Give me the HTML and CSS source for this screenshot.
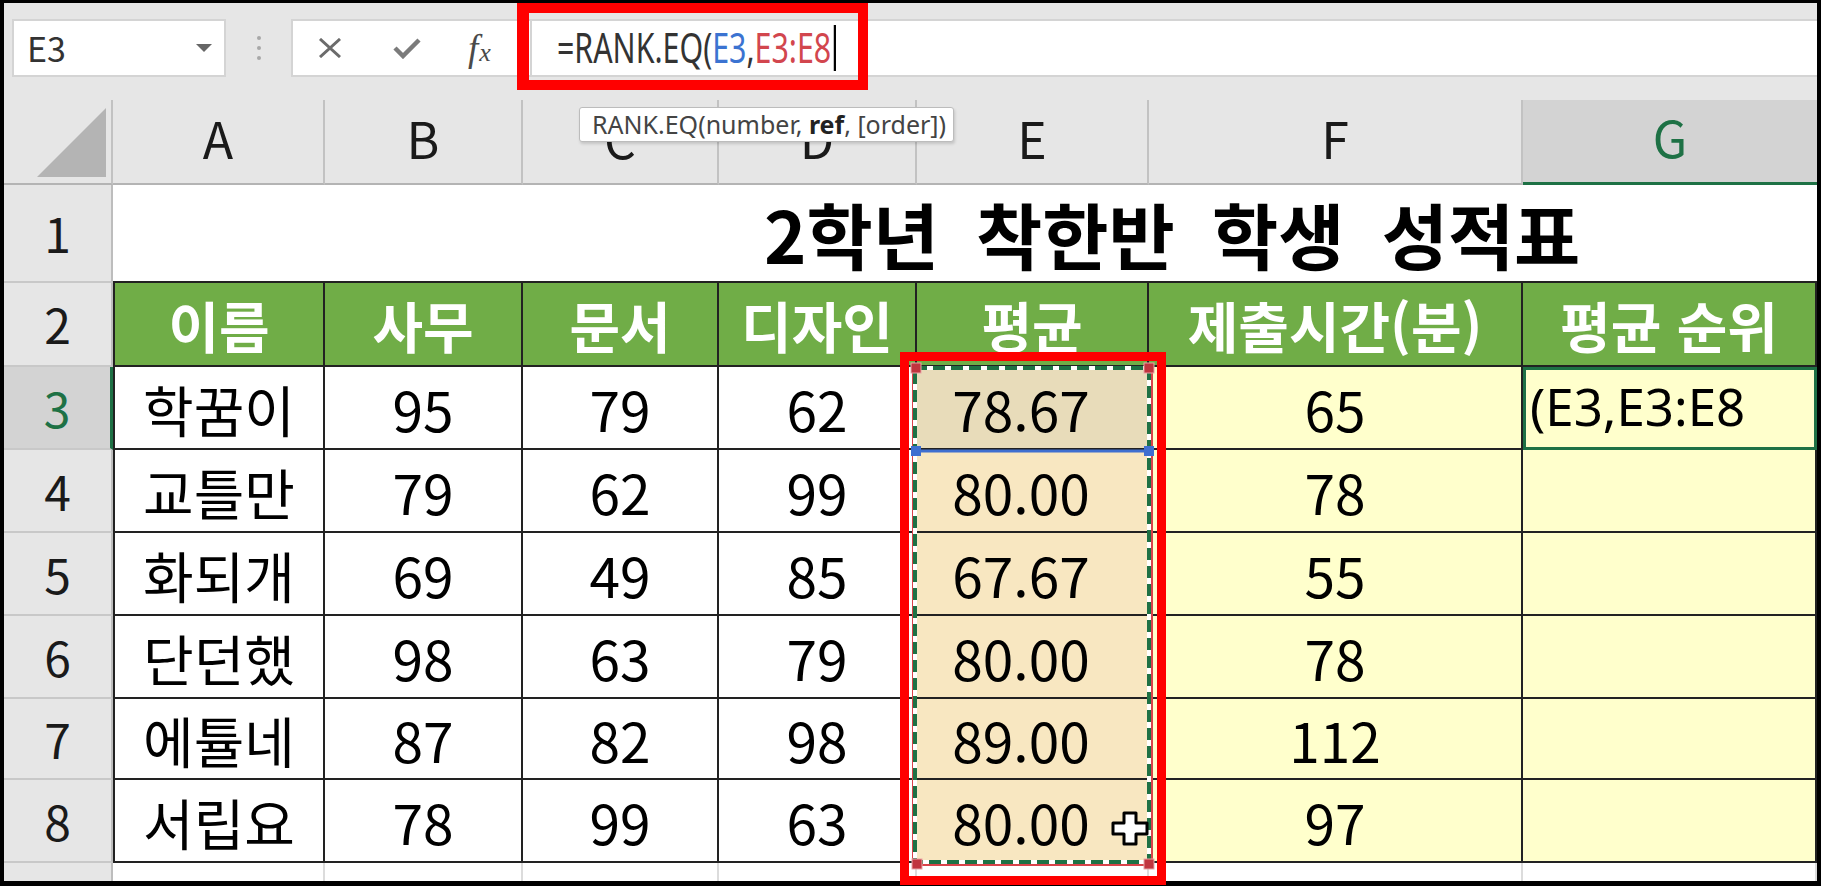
FILE: index.html
```html
<!DOCTYPE html>
<html lang="ko">
<head>
<meta charset="utf-8">
<title>RANK.EQ</title>
<link rel="stylesheet" href="styles.css">
</head>
<body>
<div class="app">
  <div class="toolbar">
    <div class="namebox"><span>E3</span><span class="dd"></span></div>
    <div class="sep"><i></i><i></i><i></i></div>
    <div class="fxbox">
      <svg class="ic-x" width="24" height="20" viewBox="0 0 24 20"><path d="M2 1 L22 19 M22 1 L2 19" stroke="#6b6b6b" stroke-width="3" fill="none"/></svg>
      <svg class="ic-ok" width="28" height="22" viewBox="0 0 28 22"><path d="M2 11 L10 19 L26 3" stroke="#7b7b7b" stroke-width="4.5" fill="none"/></svg>
      <span class="fx"><i>f</i><i class="sx">x</i></span>
    </div>
    <div class="formula"><span class="ftext">=RANK.EQ(<span class="ref1">E3</span>,<span class="ref2">E3:E8</span><span class="caret"></span></span></div>
  </div>

  <div class="sheet">
    <div class="ch corner"><span class="tri"></span></div>
    <div class="ch">A</div><div class="ch">B</div><div class="ch">C</div><div class="ch">D</div><div class="ch">E</div><div class="ch">F</div><div class="ch sel">G</div>

    <div class="rh">1</div>
    <div class="c title">2학년 착한반 학생 성적표</div>

    <div class="rh">2</div>
    <div class="c hd first">이름</div><div class="c hd">사무</div><div class="c hd">문서</div><div class="c hd">디자인</div><div class="c hd">평균</div><div class="c hd">제출시간(분)</div><div class="c hd">평균 순위</div>

    <div class="rh sel">3</div>
    <div class="c first">학꿈이</div><div class="c">95</div><div class="c">79</div><div class="c">62</div><div class="c e cur">78.67</div><div class="c y">65</div><div class="c y act">(E3,E3:E8</div>

    <div class="rh">4</div>
    <div class="c first">교틀만</div><div class="c">79</div><div class="c">62</div><div class="c">99</div><div class="c e">80.00</div><div class="c y">78</div><div class="c y"></div>

    <div class="rh">5</div>
    <div class="c first">화되개</div><div class="c">69</div><div class="c">49</div><div class="c">85</div><div class="c e">67.67</div><div class="c y">55</div><div class="c y"></div>

    <div class="rh">6</div>
    <div class="c first">단던했</div><div class="c">98</div><div class="c">63</div><div class="c">79</div><div class="c e">80.00</div><div class="c y">78</div><div class="c y"></div>

    <div class="rh">7</div>
    <div class="c first">에튤네</div><div class="c">87</div><div class="c">82</div><div class="c">98</div><div class="c e">89.00</div><div class="c y">112</div><div class="c y"></div>

    <div class="rh">8</div>
    <div class="c first">서립요</div><div class="c">78</div><div class="c">99</div><div class="c">63</div><div class="c e">80.00</div><div class="c y">97</div><div class="c y"></div>

    <div class="rh last"></div>
    <div class="blank"></div><div class="blank"></div><div class="blank"></div><div class="blank"></div><div class="blank"></div><div class="blank"></div><div class="blank"></div>
  </div>

  <div class="tooltip">RANK.EQ(number, <b>ref</b>, [order])</div>

  <svg class="marquee" width="254" height="516" viewBox="0 0 254 516">
    <rect x="7" y="9" width="239" height="498" fill="none" stroke="#d9434a" stroke-width="2"/>
    <rect x="9" y="10" width="234" height="494" fill="none" stroke="#ffffff" stroke-width="4"/>
    <rect x="9" y="10" width="234" height="494" fill="none" stroke="#1e7145" stroke-width="4" stroke-dasharray="12 6"/>
    <line x1="9" y1="93" x2="243" y2="93" stroke="#3f6fd0" stroke-width="3"/>
    <rect x="5" y="88" width="10" height="10" fill="#3f6fd0"/>
    <rect x="238" y="88" width="10" height="10" fill="#3f6fd0"/>
    <rect x="5" y="5" width="10" height="10" fill="#c0353f" stroke="#e9a3a6" stroke-width="1"/>
    <rect x="238" y="5" width="10" height="10" fill="#c0353f" stroke="#e9a3a6" stroke-width="1"/>
    <rect x="6" y="501" width="10" height="10" fill="#c0353f" stroke="#e9a3a6" stroke-width="1"/>
    <rect x="238" y="501" width="10" height="10" fill="#c0353f" stroke="#e9a3a6" stroke-width="1"/>
  </svg>

  <svg class="cursor" width="38" height="35" viewBox="0 0 38 35">
    <path d="M13 2 H25 V12 H36 V23 H25 V33 H13 V23 H2 V12 H13 Z" fill="#ffffff" stroke="#000000" stroke-width="3" stroke-linejoin="round"/>
  </svg>

  <div class="redbox rb-formula"></div>
  <div class="redbox rb-range"></div>
</div>
</body>
</html>
```

FILE: styles.css
```css
* { box-sizing: border-box; }

html, body {
  margin: 0;
  padding: 0;
  background: #000;
}

body {
  width: 1821px;
  height: 886px;
  overflow: hidden;
  font-family: "Noto Sans CJK KR", "Noto Sans", sans-serif;
}

.app {
  position: relative;
  margin: 3px 4px 0;
  width: 1813px;
  height: 878px;
  background: #e6e6e6;
}

/* ---------- toolbar ---------- */
.toolbar {
  height: 97px;
  display: flex;
  align-items: flex-start;
  padding-top: 16px;
}

.namebox {
  margin-left: 8px;
  width: 214px;
  height: 58px;
  background: #fff;
  border: 2px solid #d4d4d4;
  display: flex;
  align-items: center;
  justify-content: space-between;
  padding: 0 12px 0 13px;
  font-size: 34px;
  color: #333;
  line-height: 1.2;
}

.dd {
  width: 0;
  height: 0;
  border-left: 8px solid transparent;
  border-right: 8px solid transparent;
  border-top: 8px solid #666;
}

.sep {
  width: 65px;
  height: 58px;
  display: flex;
  flex-direction: column;
  align-items: center;
  justify-content: center;
  gap: 6px;
}

.sep i {
  display: block;
  width: 4px;
  height: 4px;
  border-radius: 50%;
  background: #a8a8a8;
}

.fxbox {
  width: 239px;
  height: 58px;
  background: #fff;
  border: 2px solid #d4d4d4;
  border-right: none;
  display: flex;
  align-items: center;
  padding-left: 25px;
}

.ic-ok { margin-left: 51px; }

.fx {
  margin-left: 47px;
  font-family: "Liberation Serif", serif;
  font-style: italic;
  color: #4a4a4a;
  line-height: 1;
  display: flex;
  align-items: baseline;
}

.fx i { font-size: 37px; }
.fx .sx { font-size: 26px; margin-left: 1px; }

.formula {
  flex: 1;
  height: 58px;
  background: #fff;
  border: 2px solid #d4d4d4;
  border-right: none;
  display: flex;
  align-items: center;
  padding-left: 25px;
  white-space: nowrap;
}

.ftext {
  display: inline-flex;
  align-items: center;
  font-family: "Noto Sans", sans-serif;
  font-size: 41px;
  line-height: 1.2;
  color: #333;
  transform: scaleX(0.74);
  transform-origin: left center;
}

.ref1 { color: #3b73d1; }
.ref2 { color: #d2464e; }

.caret {
  display: inline-block;
  width: 3px;
  height: 46px;
  background: #000;
  margin-left: 3px;
}

/* ---------- sheet ---------- */
.sheet {
  display: grid;
  grid-template-columns: 109px 212px 198px 196px 198px 232px 374px 294px;
  grid-template-rows: 85px 98px 84px 83px 83px 83px 83px 81px 83px 18px;
}

.ch {
  display: flex;
  align-items: center;
  justify-content: center;
  background: #e6e6e6;
  border-right: 2px solid #c2c2c2;
  border-bottom: 2px solid #b4b4b4;
  font-size: 50px;
  color: #1a1a1a;
  line-height: 1.2;
  padding-bottom: 10px;
}

.ch.sel {
  background: #d3d3d3;
  color: #1e7145;
  border-bottom: 3px solid #1e7145;
  border-right: none;
}

.corner {
  justify-content: flex-end;
  align-items: flex-end;
  padding: 0 5px 6px 0;
}

.tri {
  display: block;
  width: 69px;
  height: 69px;
  background: #b4b4b4;
  clip-path: polygon(100% 0, 100% 100%, 0 100%);
}

.rh {
  display: flex;
  align-items: center;
  justify-content: center;
  background: #e6e6e6;
  border-right: 2px solid #bdbdbd;
  border-bottom: 2px solid #c8c8c8;
  font-size: 48px;
  color: #1a1a1a;
  line-height: 1.2;
}

.rh.sel {
  background: #d3d3d3;
  color: #1e7145;
  border-right: 3px solid #1e7145;
}

.rh.last { border-bottom: none; }

.c {
  display: flex;
  align-items: center;
  justify-content: center;
  background: #fff;
  border-right: 2px solid #222;
  border-bottom: 2px solid #222;
  font-size: 55px;
  color: #000;
  line-height: 1.2;
  white-space: nowrap;
  overflow: hidden;
}

.c.first { border-left: 2px solid #222; }

.title {
  grid-column: 2 / 9;
  justify-content: flex-start;
  padding-left: 651px;
  font-size: 72px;
  font-weight: 700;
  word-spacing: 17px;
  border-right: none;
  overflow: visible;
}

.hd {
  background: #70ad47;
  color: #fff;
  font-weight: 700;
}

.e {
  background: #f8e7c1;
  padding-right: 22px;
}

.e.cur { background: #e8dcba; }

.y { background: #ffffcc; }

.act {
  justify-content: flex-start;
  padding-left: 7px;
  font-family: "Noto Sans", sans-serif;
  font-size: 51px;
  border-right: 3px solid #1e7145;
  border-bottom: 3px solid #1e7145;
  box-shadow: inset 3px 3px 0 #1e7145;
}

.blank {
  background: #fff;
  border-right: 2px solid #dcdcdc;
}

/* ---------- overlays ---------- */
.tooltip {
  position: absolute;
  left: 575px;
  top: 104px;
  width: 375px;
  height: 35px;
  background: #fff;
  border: 1px solid #bcbcbc;
  border-radius: 3px;
  box-shadow: 1px 2px 3px rgba(0, 0, 0, 0.15);
  padding-left: 12px;
  font-family: "Noto Sans", sans-serif;
  font-size: 25px;
  line-height: 32px;
  color: #444;
  white-space: nowrap;
}

.tooltip b { color: #222; }

.marquee {
  position: absolute;
  left: 902px;
  top: 355px;
}

.cursor {
  position: absolute;
  left: 1107px;
  top: 808px;
}

.redbox {
  position: absolute;
  border: 10px solid #ff0000;
}

.rb-formula {
  left: 513px;
  top: 0;
  width: 351px;
  height: 87px;
  border-left-width: 12px;
}

.rb-range {
  left: 896px;
  top: 349px;
  width: 266px;
  height: 533px;
  border-width: 9px;
}
```
